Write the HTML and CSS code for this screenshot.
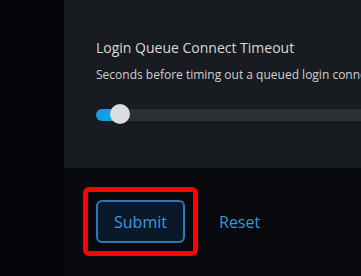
FILE: index.html
```html
<!DOCTYPE html>
<html lang="en">
<head>
  <meta charset="UTF-8">
  <title>Settings</title>
  <link rel="stylesheet" href="styles.css">
</head>
<body>
  <div class="sidebar"></div>
  <div class="main">
    <div class="panel">
      <h3 class="field-title">Login Queue Connect Timeout</h3>
      <p class="field-desc">Seconds before timing out a queued login connection attempt</p>
      <div class="slider">
        <div class="slider-fill"></div>
        <div class="slider-thumb"></div>
      </div>
    </div>
    <div class="actions">
      <div class="highlight">
        <button class="btn-submit">Submit</button>
      </div>
      <button class="btn-reset">Reset</button>
    </div>
  </div>
</body>
</html>
```
FILE: styles.css
```css
body {
  margin: 0;
  background-color: #05070a;
  font-family: "Open Sans", sans-serif;
  display: flex;
  height: 276px;
  overflow: hidden;
}
.sidebar {
  width: 64px;
  flex-shrink: 0;
  background-color: #030508;
}
.main {
  flex: 1;
  background-color: #07090c;
  overflow: hidden;
}
.panel {
  background-color: #181b1f;
  height: 168px;
  box-sizing: border-box;
  padding: 38px 0 0 32px;
  white-space: nowrap;
}
.field-title {
  margin: 0;
  font-size: 14px;
  line-height: 20px;
  font-weight: 500;
  color: #d8d9da;
}
.field-desc {
  margin: 9px 0 0;
  font-size: 12px;
  line-height: 16px;
  color: #d0d1d3;
}
.slider {
  position: relative;
  margin-top: 21px;
  height: 20px;
  width: 400px;
}
.slider::before {
  content: "";
  position: absolute;
  left: 0;
  right: 0;
  top: 5px;
  height: 12px;
  border-radius: 6px;
  background-color: #2c2f34;
}
.slider-fill {
  position: absolute;
  left: 0;
  top: 5px;
  width: 26px;
  height: 12px;
  border-radius: 6px 0 0 6px;
  background-color: #12a0e0;
}
.slider-thumb {
  position: absolute;
  left: 14px;
  top: 0;
  width: 20px;
  height: 20px;
  border-radius: 50%;
  background-color: #dcdde0;
}
.actions {
  display: flex;
  align-items: center;
  padding: 19px 0 0 19px;
}
.highlight {
  border: 5px solid #ff0000;
  border-radius: 6px;
  padding: 8px;
}
.btn-submit {
  width: 89px;
  height: 43px;
  background-color: #0a1929;
  border: 2px solid #2a79b8;
  border-radius: 6px;
  color: #3d9ad6;
  font-family: "Open Sans", sans-serif;
  font-size: 16px;
  cursor: pointer;
}
.btn-reset {
  margin-left: 21px;
  background: none;
  border: none;
  padding: 0;
  color: #3a97d4;
  font-family: "Open Sans", sans-serif;
  font-size: 16px;
  cursor: pointer;
}
```
